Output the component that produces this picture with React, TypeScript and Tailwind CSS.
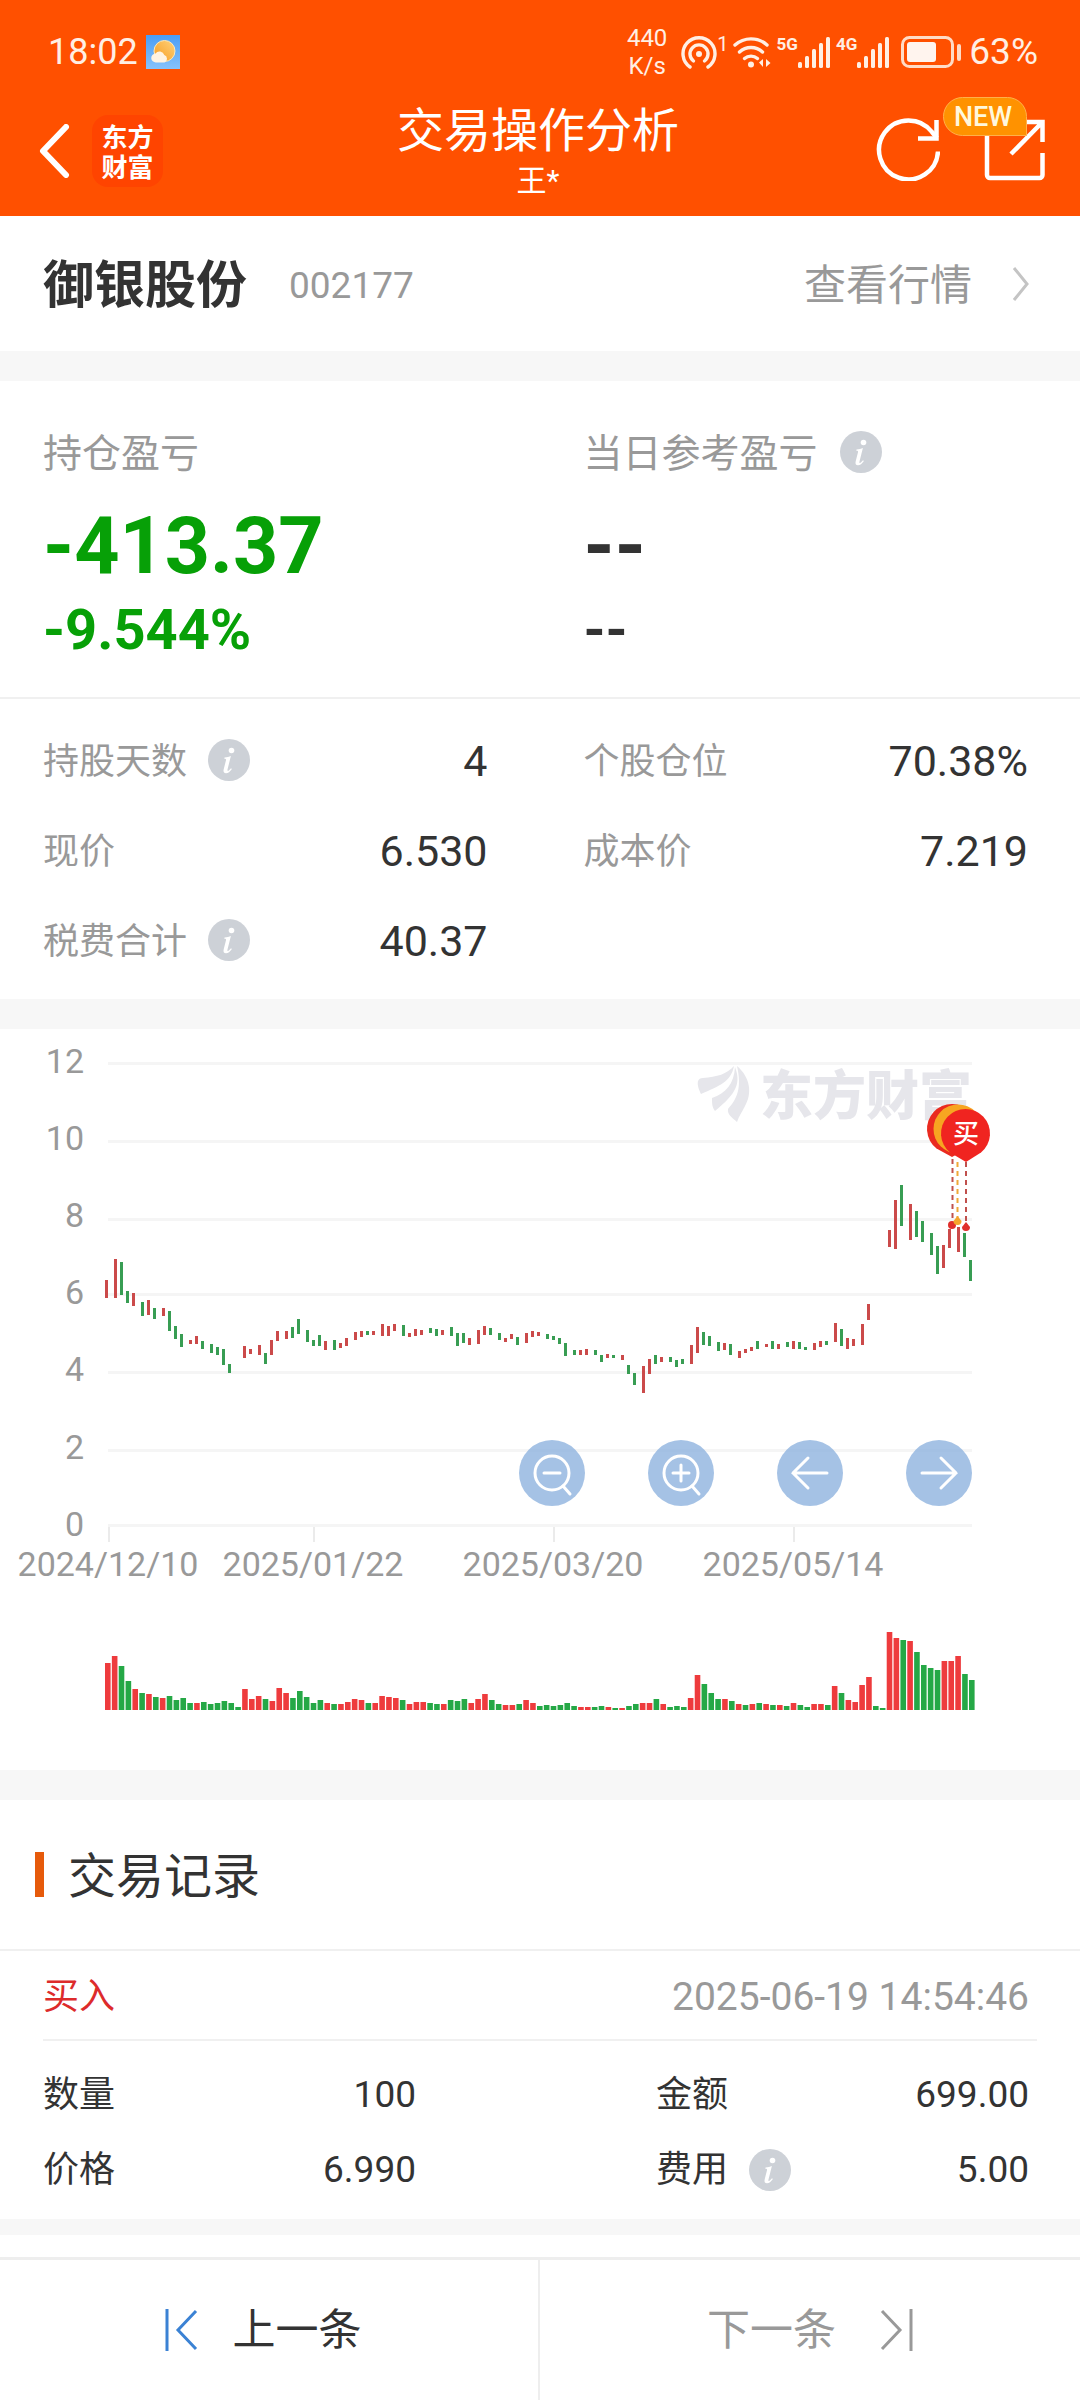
import type { ReactNode } from "react";

type Tone = "r" | "g";

/* [x, top, bottom, tone] */
const candles: [number, number, number, Tone][] = [
  [105, 251, 269, "r"], [114, 230, 269, "r"], [120, 233, 266, "g"], [126, 262, 274, "g"], [132, 264, 277, "r"],
  [141, 273, 287, "g"], [147, 271, 286, "r"], [153, 279, 290, "g"], [162, 279, 287, "r"], [168, 282, 302, "g"],
  [174, 297, 310, "g"], [180, 305, 318, "g"], [189, 311, 315, "r"], [195, 307, 315, "r"], [201, 312, 320, "g"],
  [210, 315, 324, "g"], [216, 318, 326, "g"], [222, 320, 336, "g"], [228, 335, 344, "g"], [243, 317, 329, "r"],
  [249, 320, 325, "r"], [258, 316, 326, "r"], [264, 324, 335, "g"], [270, 311, 326, "r"], [276, 302, 312, "r"],
  [285, 302, 310, "r"], [291, 298, 309, "g"], [297, 290, 305, "g"], [306, 301, 313, "g"], [312, 311, 317, "g"],
  [318, 306, 317, "g"], [324, 312, 321, "r"], [333, 311, 321, "g"], [339, 314, 319, "r"], [345, 309, 317, "r"],
  [354, 303, 311, "r"], [360, 302, 308, "r"], [366, 302, 306, "g"], [372, 302, 306, "r"], [381, 295, 307, "r"],
  [387, 297, 307, "r"], [393, 295, 302, "r"], [402, 296, 307, "g"], [408, 304, 308, "r"], [414, 300, 307, "r"],
  [420, 301, 306, "r"], [429, 299, 304, "g"], [435, 300, 307, "g"], [441, 301, 306, "r"], [450, 298, 307, "g"],
  [456, 304, 317, "g"], [462, 304, 314, "g"], [468, 309, 316, "r"], [477, 301, 315, "r"], [483, 297, 306, "r"],
  [489, 299, 306, "g"], [498, 304, 311, "g"], [504, 309, 313, "r"], [510, 305, 310, "r"], [516, 308, 316, "g"],
  [525, 304, 314, "r"], [531, 302, 308, "r"], [537, 303, 307, "r"], [546, 305, 310, "g"], [552, 307, 311, "g"],
  [558, 309, 315, "g"], [564, 314, 327, "g"], [573, 321, 326, "g"], [579, 321, 326, "r"], [585, 320, 326, "r"],
  [594, 321, 326, "g"], [600, 326, 333, "g"], [606, 325, 329, "r"], [612, 326, 329, "g"], [621, 326, 331, "r"],
  [627, 336, 345, "g"], [633, 344, 356, "g"], [642, 337, 364, "r"], [648, 330, 345, "r"], [654, 326, 335, "g"],
  [660, 328, 333, "r"], [669, 328, 333, "g"], [675, 331, 338, "g"], [681, 330, 335, "g"], [690, 316, 335, "r"],
  [696, 298, 324, "r"], [702, 303, 316, "g"], [708, 307, 317, "g"], [717, 313, 322, "g"], [723, 314, 321, "r"],
  [729, 315, 326, "g"], [738, 322, 329, "r"], [744, 320, 324, "r"], [750, 318, 322, "r"], [756, 312, 320, "g"],
  [765, 315, 318, "r"], [771, 312, 320, "g"], [777, 315, 320, "r"], [786, 313, 318, "g"], [792, 312, 320, "r"],
  [798, 313, 320, "g"], [804, 318, 321, "g"], [813, 314, 321, "r"], [819, 312, 318, "r"], [825, 312, 316, "g"],
  [834, 294, 313, "r"], [840, 300, 317, "g"], [846, 309, 320, "r"], [852, 310, 317, "r"], [861, 295, 316, "r"],
  [867, 275, 291, "r"], [888, 201, 218, "r"], [894, 171, 220, "r"], [900, 156, 197, "g"], [909, 175, 211, "r"],
  [915, 182, 208, "g"], [921, 192, 213, "g"], [930, 204, 226, "g"], [936, 217, 245, "g"], [942, 216, 239, "r"],
  [948, 200, 219, "r"], [957, 198, 223, "r"], [963, 204, 228, "g"], [969, 231, 252, "g"],
];

const volumes =
  "47r 54r 44g 29g 21r 17g 16r 13g 12r 14g 10g 12g 7g 7r 8g 6g 7g 9g 7g 3g 21r 11r 14r 11g 9r 22r 17r 12g 19g 13g 7g 10g 7r 6g 6r 8r 11r 10r 7g 7r 14r 13r 12r 10g 6r 8r 8r 7g 6g 6r 10g 9g 11g 7r 11r 16r 10g 6g 5r 5r 6g 10r 7r 4g 5g 4g 5g 7g 4g 3r 3r 3g 4g 3r 2g 2r 4g 6g 7r 7r 11g 6r 3g 4g 3g 12r 35r 26g 17g 11g 11r 9g 6r 5g 6r 7g 6r 5g 5r 4g 7r 5g 3g 6r 6r 5g 24r 17g 10r 8r 25r 33r 4g 2g 78r 72r 70g 69r 58g 45g 42g 40g 49r 49r 54r 36g 30g"
    .split(" ")
    .map((v) => ({ h: parseInt(v, 10), tone: v.slice(-1) as Tone }));

const priceAxis = [
  { label: "12", line: 34, text: 44 },
  { label: "10", line: 112, text: 121 },
  { label: "8", line: 190, text: 198 },
  { label: "6", line: 265, text: 275 },
  { label: "4", line: 343, text: 352 },
  { label: "2", line: 421, text: 430 },
  { label: "0", line: 496, text: 507 },
];

const dateAxis = [
  { label: "2024/12/10", x: 109 },
  { label: "2025/01/22", x: 314 },
  { label: "2025/03/20", x: 554 },
  { label: "2025/05/14", x: 794 },
];

function InfoButton({ label }: { label: string }) {
  return (
    <button type="button" aria-label={label} className="size-[42px] shrink-0">
      <svg viewBox="0 0 42 42" className="size-full">
        <circle cx="21" cy="21" r="21" fill="#cdd1d7" />
        <circle cx="23.5" cy="11.5" r="2.8" fill="#fff" />
        <path d="M16.5 18.6c2.6-.3 4.6-.9 6.4-1.6l-3.4 13.4c-.4 1.7.5 1.9 1.6.9l1.9-2 .9.8c-2 2.900-4 4.300-6 4.200-2.100-.1-2.800-1.700-2.200-4.100l2.300-9c.3-1.100-.2-1.500-1.700-1.500z" fill="#fff" />
      </svg>
    </button>
  );
}

function Signal() {
  return (
    <svg viewBox="0 0 34 33" className="h-[33px] w-[34px]" fill="#ffefe4">
      <rect x="0" y="26" width="4" height="6" rx="1.5" />
      <rect x="7" y="20" width="4" height="12" rx="1.5" />
      <rect x="14" y="13" width="4" height="19" rx="1.5" />
      <rect x="21" y="7" width="4" height="25" rx="1.5" />
      <rect x="28" y="1" width="4" height="31" rx="1.5" />
    </svg>
  );
}

function StatusBar() {
  return (
    <div className="flex h-[104px] items-center justify-between pr-[42px] pl-12 text-[#ffefe4]">
      <div className="flex items-center gap-2 text-[36px] leading-[40px]">
        <span>18:02</span>
        <svg viewBox="0 0 34 34" className="size-[34px]">
          <defs>
            <linearGradient id="sky" x1="0" y1="0" x2="0" y2="1">
              <stop offset="0" stopColor="#4a9df5" />
              <stop offset="1" stopColor="#86c2fb" />
            </linearGradient>
            <linearGradient id="sun" x1="0" y1="1" x2="1" y2="0">
              <stop offset="0" stopColor="#f79a1e" />
              <stop offset="1" stopColor="#ffd27a" />
            </linearGradient>
          </defs>
          <rect width="34" height="34" fill="url(#sky)" />
          <circle cx="18.5" cy="16" r="10.5" fill="url(#sun)" stroke="#ffe9b8" strokeWidth="1" />
          <path d="M10 27.5a4.5 4.5 0 0 1-.5-9 5 5 0 0 1 8.800 1.500 4 4 0 0 1 .2 7.500z" fill="#fff3e2" />
        </svg>
      </div>
      <div className="flex items-center">
        <span className="mr-3.5 text-center text-[24px] leading-[28px]">
          440
          <br />
          K/s
        </span>
        <svg viewBox="0 0 36 34" className="h-[34px] w-9" fill="none" stroke="#ffefe4" strokeWidth="3.4" strokeLinecap="round">
          <circle cx="18" cy="19" r="3" fill="#ffefe4" stroke="none" />
          <path d="M12.5 26a9 9 0 1 1 11 0" />
          <path d="M9 32a16 16 0 1 1 18 0" />
        </svg>
        <span className="-mt-4 mr-1 text-[20px] leading-[20px]">1</span>
        <svg viewBox="0 0 38 34" className="mr-1.5 h-[34px] w-[38px]" fill="none" stroke="#ffefe4" strokeWidth="3.4" strokeLinecap="round">
          <path d="M2 10a24 24 0 0 1 32 0" />
          <path d="M6.5 17a17 17 0 0 1 23 0" />
          <path d="M11.5 23.5a10 10 0 0 1 13 0" />
          <circle cx="18" cy="29.5" r="3" fill="#ffefe4" stroke="none" />
          <path d="M30 24v8l-4-4.5zM33 24v8l4.5-4z" fill="#ffefe4" stroke="none" />
        </svg>
        <span className="-mt-4 text-[17px] leading-[20px] font-bold">5G</span>
        <Signal />
        <span className="-mt-4 ml-1 text-[17px] leading-[20px] font-bold">4G</span>
        <Signal />
        <svg viewBox="0 0 60 34" className="mr-2 ml-2.5 h-[34px] w-[60px]" fill="none">
          <rect x="1.5" y="2.5" width="50" height="29" rx="7" stroke="#ffdcc6" strokeWidth="3" />
          <rect x="6" y="7" width="29" height="20" rx="3" fill="#fff4ee" />
          <rect x="56" y="9" width="4" height="17" rx="2" fill="#ffdcc6" />
        </svg>
        <span className="text-[37px] leading-[40px]">63%</span>
      </div>
    </div>
  );
}

function TitleBar() {
  return (
    <div className="grid h-28 grid-cols-[1fr_auto_1fr] items-start">
      <div className="flex items-center gap-[22px] pt-[11px] pl-[38px]">
        <button type="button" aria-label="返回" className="h-[54px] w-8">
          <svg viewBox="0 0 32 54" className="size-full" fill="none" stroke="#fff" strokeWidth="6" strokeLinecap="round" strokeLinejoin="round">
            <path d="M28 3L5 27l23 24" />
          </svg>
        </button>
        <div className="flex h-[72px] w-[71px] items-center justify-center rounded-2xl bg-[#ff4400] text-center font-['Noto_Sans_CJK_SC',sans-serif] text-[26px] leading-[30px] font-bold text-white">
          <span>
            东方
            <br />
            财富
          </span>
        </div>
      </div>
      <div className="flex flex-col items-center pr-1 text-white">
        <h1 className="text-[47px] leading-[54px]">交易操作分析</h1>
        <p className="text-[30px] leading-[46px]">王*</p>
      </div>
      <div className="flex justify-end gap-11 pt-[13px] pr-[34px]">
        <button type="button" aria-label="刷新" className="size-16">
          <svg viewBox="0 0 64 64" className="size-full" fill="none" stroke="#fff" strokeWidth="4.5">
            <path d="M62 34.5A29.5 29.5 0 1 1 56 15l5 6" />
            <path d="M60.5 3v18.500H42" />
          </svg>
        </button>
        <button type="button" aria-label="分享" className="relative h-16 w-[62px]">
          <svg viewBox="0 0 62 64" className="size-full" fill="none" stroke="#fff" strokeWidth="4.5">
            <path d="M36 5H58.5V25M58 5.5L27 37" />
            <path d="M3 5V58a3 3 0 0 0 3 3H55.5a3 3 0 0 0 3-3V36" />
          </svg>
          <span className="absolute -top-5 -left-[41px] flex h-[39px] w-[84px] items-center justify-center rounded-[20px] rounded-br-none border border-[#ffb04a] bg-[#ff9200] pr-1 text-[27px] leading-[30px] font-medium text-[#fff8dc]">
            NEW
          </span>
        </button>
      </div>
    </div>
  );
}

function Row({ label, value, info }: { label: string; value?: string; info?: boolean }) {
  return (
    <div className="flex h-[90px] items-center">
      <dt className="flex items-center gap-[21px] text-[36px] leading-[48px] text-[#999]">
        <span className="pt-1">{label}</span>
        {info && <InfoButton label={label + "说明"} />}
      </dt>
      <dd className="ml-auto pt-0.5 text-[43px] leading-[48px] text-[#333]">{value}</dd>
    </div>
  );
}

function RecordRow({ label, value, info }: { label: string; value: string; info?: boolean }) {
  return (
    <div className="flex h-[75px] items-center">
      <dt className="flex items-center gap-[21px] text-[36px] leading-[48px]">
        {label}
        {info && <InfoButton label={label + "说明"} />}
      </dt>
      <dd className="ml-auto text-[37px] leading-[48px]">{value}</dd>
    </div>
  );
}

function ChartButton({ label, children }: { label: string; children: ReactNode }) {
  return (
    <button type="button" aria-label={label} className="size-[66px] rounded-full bg-[#8fb3de]/80">
      <svg viewBox="0 0 66 66" className="size-full" fill="none" stroke="#fff" strokeWidth="3" strokeLinecap="round">
        {children}
      </svg>
    </button>
  );
}

function Chart() {
  return (
    <section aria-label="股价走势" className="relative">
      <svg viewBox="0 0 1080 741" className="block w-full font-['Roboto','Noto_Sans_CJK_SC',sans-serif]">
        {priceAxis.map((a) => (
          <g key={a.label}>
            <rect x="108" y={a.line - 1} width="864" height="3" fill="#f5f5f5" />
            <text x="84" y={a.text} textAnchor="end" fontSize="34" fill="#999">{a.label}</text>
          </g>
        ))}
        {dateAxis.map((d) => (
          <g key={d.label}>
            <rect x={d.x - 1} y="498" width="2" height="15" fill="#ebebeb" />
            <text x={d.x - 1} y="547" textAnchor="middle" fontSize="34" fill="#999">{d.label}</text>
          </g>
        ))}
        <g fill="#e6e6eb">
          <path d="M698 52c1-2 2-3 5-3 14-1 24-4 31-12-3 16-15 20-33 28-2-4-4-9-3-13z" />
          <path d="M712 69c14-5 22-14 23-31 6 16 2 26-20 44-3-4-3-8-3-13z" />
          <path d="M728 80c9-10 14-21 9-43 14 12 15 28 8 40-3 6-6 10-8 16-4-4-10-7-9-13z" />
          <text x="760" y="86" fontSize="53" fontWeight="900" fontFamily="Noto Sans CJK SC">东方财富</text>
        </g>
        {candles.map(([x, top, bottom, tone]) => (
          <rect key={x} x={x} y={top} width="3" height={bottom - top} fill={tone === "r" ? "#cb4a4a" : "#389d53"} />
        ))}
        <g fill="none" strokeWidth="2" strokeDasharray="5 4">
          <path d="M952.5 130V193" stroke="#c0504d" />
          <path d="M957.5 133V191" stroke="#f0a836" />
          <path d="M966 133V197" stroke="#c0504d" />
        </g>
        <circle cx="952" cy="196" r="4" fill="#e02f2b" />
        <path d="M957.5 187l4 5a4 4 0 1 1-8 0z" fill="#f5a52c" />
        <path d="M966 193l4 5a4 4 0 1 1-8 0z" fill="#e02f2b" />
        <path d="M952 128L936.500 119.500A25 25 0 1 1 967.500 119.500z" fill="#ea2a20" />
        <circle cx="958" cy="100" r="24.5" fill="#f7a521" />
        <path d="M966 133L950 123.500A24.500 24.500 0 1 1 981 123.500z" fill="#f02420" />
        <text x="966" y="114" textAnchor="middle" fontSize="26" fontWeight="500" fill="#fff">买</text>
        {volumes.map((v, i) => (
          <rect key={i} x={105 + (i * 864) / 126} y={681 - v.h} width="5.6" height={v.h} fill={v.tone === "r" ? "#ee3b3d" : "#25a846"} />
        ))}
      </svg>
      <div className="absolute top-[411px] right-[108px] flex gap-[63px]">
        <ChartButton label="缩小">
          <circle cx="33" cy="33" r="17" />
          <path d="M25 33h16M44 46l7 8" />
        </ChartButton>
        <ChartButton label="放大">
          <circle cx="33" cy="33" r="17" />
          <path d="M25 33h16M33 25v16M44 46l7 8" />
        </ChartButton>
        <ChartButton label="向左">
          <path d="M50 33H16M31 18L16 33l15 15" />
        </ChartButton>
        <ChartButton label="向右">
          <path d="M16 33h34M35 18l15 15-15 15" />
        </ChartButton>
      </div>
    </section>
  );
}

const Gap = () => <div className="h-[30px] bg-[#f7f7f7]" />;

export default function App() {
  return (
    <div className="flex min-h-screen w-full flex-col bg-white font-['Roboto','Noto_Sans_CJK_SC',sans-serif] text-[#333]">
      <header className="bg-[#ff5000]">
        <StatusBar />
        <TitleBar />
      </header>

      <main className="flex-1">
        <section className="flex h-[135px] items-center pt-1 pr-[50px] pl-[43px]">
          <h2 className="text-[51px] leading-[60px] font-bold">御银股份</h2>
          <span className="ml-[42px] text-[37px] leading-[48px] text-[#999]">002177</span>
          <a href="#quote" className="ml-auto flex items-center gap-10 text-[42px] leading-[48px] text-[#999]">
            查看行情
            <svg viewBox="0 0 18 34" className="mb-1 h-[34px] w-[18px]" fill="none" stroke="#c4c4c4" strokeWidth="3">
              <path d="M2 1l13 16L2 33" />
            </svg>
          </a>
        </section>
        <Gap />

        <section className="grid h-[318px] grid-cols-2 gap-24 border-b-2 border-[#f0f0f0] pt-[41px] pr-[52px] pl-[43px]">
          <div>
            <p className="flex h-[60px] items-center pt-1 text-[39px] leading-[56px] text-[#999]">持仓盈亏</p>
            <p className="mt-5 text-[79px] leading-[88px] font-bold text-[#07a007]">-413.37</p>
            <p className="mt-2 text-[56px] leading-[64px] font-bold text-[#07a007]">-9.544%</p>
          </div>
          <div>
            <p className="flex h-[60px] items-center gap-[22px] text-[39px] leading-[56px] text-[#999]">
              <span className="pt-1">当日参考盈亏</span>
              <InfoButton label="当日参考盈亏说明" />
            </p>
            <p className="mt-5 text-[79px] leading-[88px] font-bold">--</p>
            <p className="mt-2 text-[56px] leading-[64px] font-bold">--</p>
          </div>
        </section>

        <dl className="grid grid-cols-2 gap-x-24 pt-4 pr-[52px] pb-3.5 pl-[43px]">
          <Row label="持股天数" value="4" info />
          <Row label="个股仓位" value="70.38%" />
          <Row label="现价" value="6.530" />
          <Row label="成本价" value="7.219" />
          <Row label="税费合计" value="40.37" info />
        </dl>
        <Gap />

        <Chart />
        <Gap />

        <section>
          <div className="flex h-[151px] items-center gap-6 border-b-2 border-[#f0f0f0] pl-[35px]">
            <span className="h-[45px] w-[9px] bg-[#e65a0b]" />
            <h2 className="pt-1 text-[48px] leading-[60px]">交易记录</h2>
          </div>
          <div className="mr-[43px] ml-[43px] flex h-[90px] items-center justify-between border-b-2 border-[#f0f0f0] pt-1 pr-2">
            <span className="text-[36px] leading-[48px] text-[#dd2b2b]">买入</span>
            <time className="text-[39px] leading-[48px] text-[#999]">2025-06-19 14:54:46</time>
          </div>
          <dl className="grid grid-cols-2 gap-x-60 pt-4 pr-[51px] pb-3 pl-[43px]">
            <RecordRow label="数量" value="100" />
            <RecordRow label="金额" value="699.00" />
            <RecordRow label="价格" value="6.990" />
            <RecordRow label="费用" value="5.00" info />
          </dl>
          <div className="h-4 bg-[#f7f7f7]" />
        </section>
      </main>

      <nav className="grid h-[143px] grid-cols-2 border-t-3 border-[#eee] text-[43px] leading-[56px]">
        <button type="button" className="flex items-center justify-center gap-[35px] border-r-2 border-[#eee] pr-3">
          <svg viewBox="0 0 33 42" className="h-[42px] w-[33px]" fill="none" stroke="#3b82d4" strokeWidth="3">
            <path d="M2 0V42M31 2L13 21 31 40" />
          </svg>
          上一条
        </button>
        <button type="button" className="flex items-center justify-center gap-11 text-[#999]">
          下一条
          <svg viewBox="0 0 33 42" className="h-[42px] w-[33px]" fill="none" stroke="#999" strokeWidth="3">
            <path d="M31 0V42M2 2L20 21 2 40" />
          </svg>
        </button>
      </nav>
    </div>
  );
}
